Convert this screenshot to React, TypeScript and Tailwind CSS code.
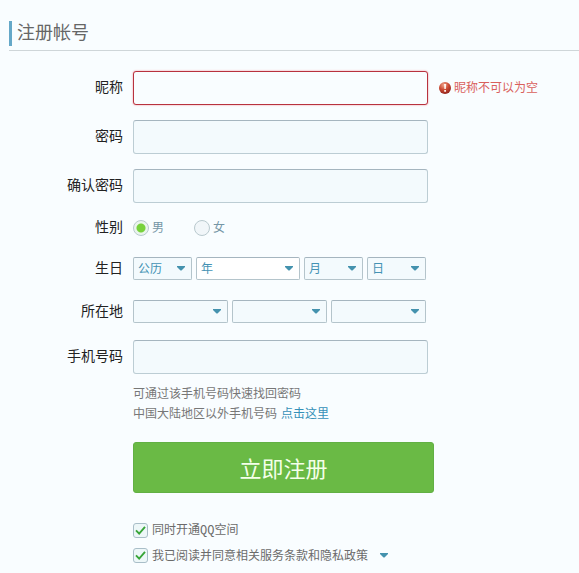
import React, { useState } from "react";

const inputStyle =
  "block h-[34px] w-full max-w-[295px] rounded-[3px] border px-2 text-sm text-[#333333] outline-none";
const normalInput =
  "border-[#bccdd4] border-t-[#a5b5bf] bg-[#f3fafd] focus:border-[#5ba6c4]";
const errorInput =
  "border-[#b8323e] bg-[#f9fdff] shadow-[0_0_2px_#f08890]";

function Arrow() {
  return (
    <svg width="8" height="5" viewBox="0 0 8 5" aria-hidden="true">
      <path d="M0 0h8v1L4.5 4.5h-1L0 1z" fill="#4492ae" />
    </svg>
  );
}

function Row({
  label,
  htmlFor,
  children,
}: {
  label: string;
  htmlFor?: string;
  children: React.ReactNode;
}) {
  return (
    <div className="flex items-center gap-2.5">
      <label
        htmlFor={htmlFor}
        className="w-[123px] shrink-0 pb-0.5 text-right text-sm leading-5 text-[#222222]"
      >
        {label}
      </label>
      {children}
    </div>
  );
}

function Select({
  id,
  name,
  text = "",
  className,
}: {
  id?: string;
  name: string;
  text?: string;
  className: string;
}) {
  return (
    <div className={`relative ${className}`}>
      <select
        id={id}
        aria-label={name}
        className="block h-[23px] w-full appearance-none rounded-xs border border-[#b4c4cb] border-t-[#a5b5bf] bg-transparent pl-1 pr-4 text-xs text-[#4492b4] outline-none"
      >
        <option>{text}</option>
      </select>
      <span className="pointer-events-none absolute inset-y-0 right-[7px] flex items-center">
        <Arrow />
      </span>
    </div>
  );
}

function Radio({
  label,
  checked,
  onChange,
}: {
  label: string;
  checked: boolean;
  onChange: () => void;
}) {
  return (
    <label className="flex items-center gap-[3px] text-xs leading-4 text-[#7596a6]">
      <input
        type="radio"
        name="gender"
        checked={checked}
        onChange={onChange}
        className="size-4 appearance-none rounded-full border border-[#b9c9ce] bg-[#f1f6f9] checked:bg-[radial-gradient(circle,#78d23c_4px,#eaf5ec_5px)]"
      />
      {label}
    </label>
  );
}

function Checkbox({
  label,
  className = "",
}: {
  label: string;
  className?: string;
}) {
  return (
    <label
      className={`flex items-center gap-1 text-xs leading-4 text-[#6b6b6b] ${className}`}
    >
      <span className="relative size-[15px] shrink-0">
        <input
          type="checkbox"
          defaultChecked
          className="peer block size-[15px] appearance-none rounded-[3px] border border-[#a9bec8] bg-[#edf7f8]"
        />
        <svg
          className="pointer-events-none absolute inset-0 hidden peer-checked:block"
          width="15"
          height="15"
          viewBox="0 0 16 16"
          aria-hidden="true"
        >
          <path
            d="M3.2 7.8l3.4 3.6 6.2-7.2"
            fill="none"
            stroke="#37a537"
            strokeWidth="2"
          />
        </svg>
      </span>
      <span className="pt-0.5">{label}</span>
    </label>
  );
}

function ErrorIcon() {
  return (
    <svg width="12" height="12" viewBox="0 0 12 12" aria-hidden="true">
      <defs>
        <radialGradient id="ball" cx="0.4" cy="0.25" r="0.8">
          <stop offset="0" stopColor="#f0a58c" />
          <stop offset="0.5" stopColor="#cb4a33" />
          <stop offset="1" stopColor="#8c1f1a" />
        </radialGradient>
      </defs>
      <circle cx="6" cy="6" r="6" fill="url(#ball)" />
      <path d="M5 2h2.2l-.4 5H5.4zM5.2 8h1.8v1.8H5.2z" fill="#fff4ee" />
    </svg>
  );
}

function App() {
  const [gender, setGender] = useState("male");

  return (
    <main className="min-h-screen w-full bg-[#f9fdff] pb-2 pt-[21px] font-['Liberation_Sans','Noto_Sans_CJK_SC',sans-serif]">
      <header className="ml-[9px] border-b border-[#cfd6d9] pb-1">
        <h1 className="border-l-3 border-[#65a8c8] pl-[5px] text-lg leading-[25px] text-[#666666]">
          注册帐号
        </h1>
      </header>

      <form className="mt-5" onSubmit={(e) => e.preventDefault()}>
        <div className="flex flex-col gap-[15px]">
          <Row label="昵称" htmlFor="nick">
            <input id="nick" className={`${inputStyle} ${errorInput}`} />
            <p className="flex shrink-0 items-center gap-[3px] pl-px pr-4 text-xs text-[#d9605c]">
              <ErrorIcon />
              昵称不可以为空
            </p>
          </Row>
          <Row label="密码" htmlFor="password">
            <input
              id="password"
              type="password"
              className={`${inputStyle} ${normalInput}`}
            />
          </Row>
          <Row label="确认密码" htmlFor="confirm">
            <input
              id="confirm"
              type="password"
              className={`${inputStyle} ${normalInput}`}
            />
          </Row>
        </div>

        <div className="mt-3.5">
          <Row label="性别">
            <div className="flex gap-[30px]">
              <Radio
                label="男"
                checked={gender === "male"}
                onChange={() => setGender("male")}
              />
              <Radio
                label="女"
                checked={gender === "female"}
                onChange={() => setGender("female")}
              />
            </div>
          </Row>
        </div>

        <div className="mt-[18px]">
          <Row label="生日" htmlFor="calendar">
            <div className="flex gap-1">
              <Select id="calendar" name="历法" text="公历" className="w-[59px] bg-[#f3fafd]" />
              <Select name="年" text="年" className="w-26 bg-white" />
              <Select name="月" text="月" className="w-[59px] bg-[#f3fafd]" />
              <Select name="日" text="日" className="w-[59px] bg-[#f3fafd]" />
            </div>
          </Row>
        </div>

        <div className="mt-5">
          <Row label="所在地" htmlFor="country">
            <div className="flex gap-1">
              <Select id="country" name="国家" className="w-[95px] bg-[#f3fafd]" />
              <Select name="省份" className="w-[95px] bg-[#f3fafd]" />
              <Select name="城市" className="w-[95px] bg-[#f3fafd]" />
            </div>
          </Row>
        </div>

        <div className="mt-[17px]">
          <Row label="手机号码" htmlFor="phone">
            <input
              id="phone"
              type="tel"
              className={`${inputStyle} ${normalInput}`}
            />
          </Row>
        </div>

        <div className="pl-[133px]">
          <div className="mt-2.5 text-xs leading-5 text-[#777777]">
            <p>可通过该手机号码快速找回密码</p>
            <p>
              中国大陆地区以外手机号码
              <a href="#" className="ml-1 text-[#3590b8]">
                点击这里
              </a>
            </p>
          </div>

          <button
            type="submit"
            className="mt-[18px] block h-[51px] w-full max-w-[301px] rounded-[3px] border border-[#62b044] bg-[#6aba45] pt-1 text-[22px] text-[#f4ffe9]"
          >
            立即注册
          </button>

          <div className="mt-7 flex flex-col gap-[7px]">
            <Checkbox
              label="同时开通QQ空间"
              className="font-['Liberation_Mono','Noto_Sans_CJK_SC',monospace]"
            />
            <div className="flex items-center gap-3">
              <Checkbox label="我已阅读并同意相关服务条款和隐私政策" />
              <button type="button" aria-label="查看条款" className="flex h-4 items-center">
                <Arrow />
              </button>
            </div>
          </div>
        </div>
      </form>
    </main>
  );
}

export default App;
